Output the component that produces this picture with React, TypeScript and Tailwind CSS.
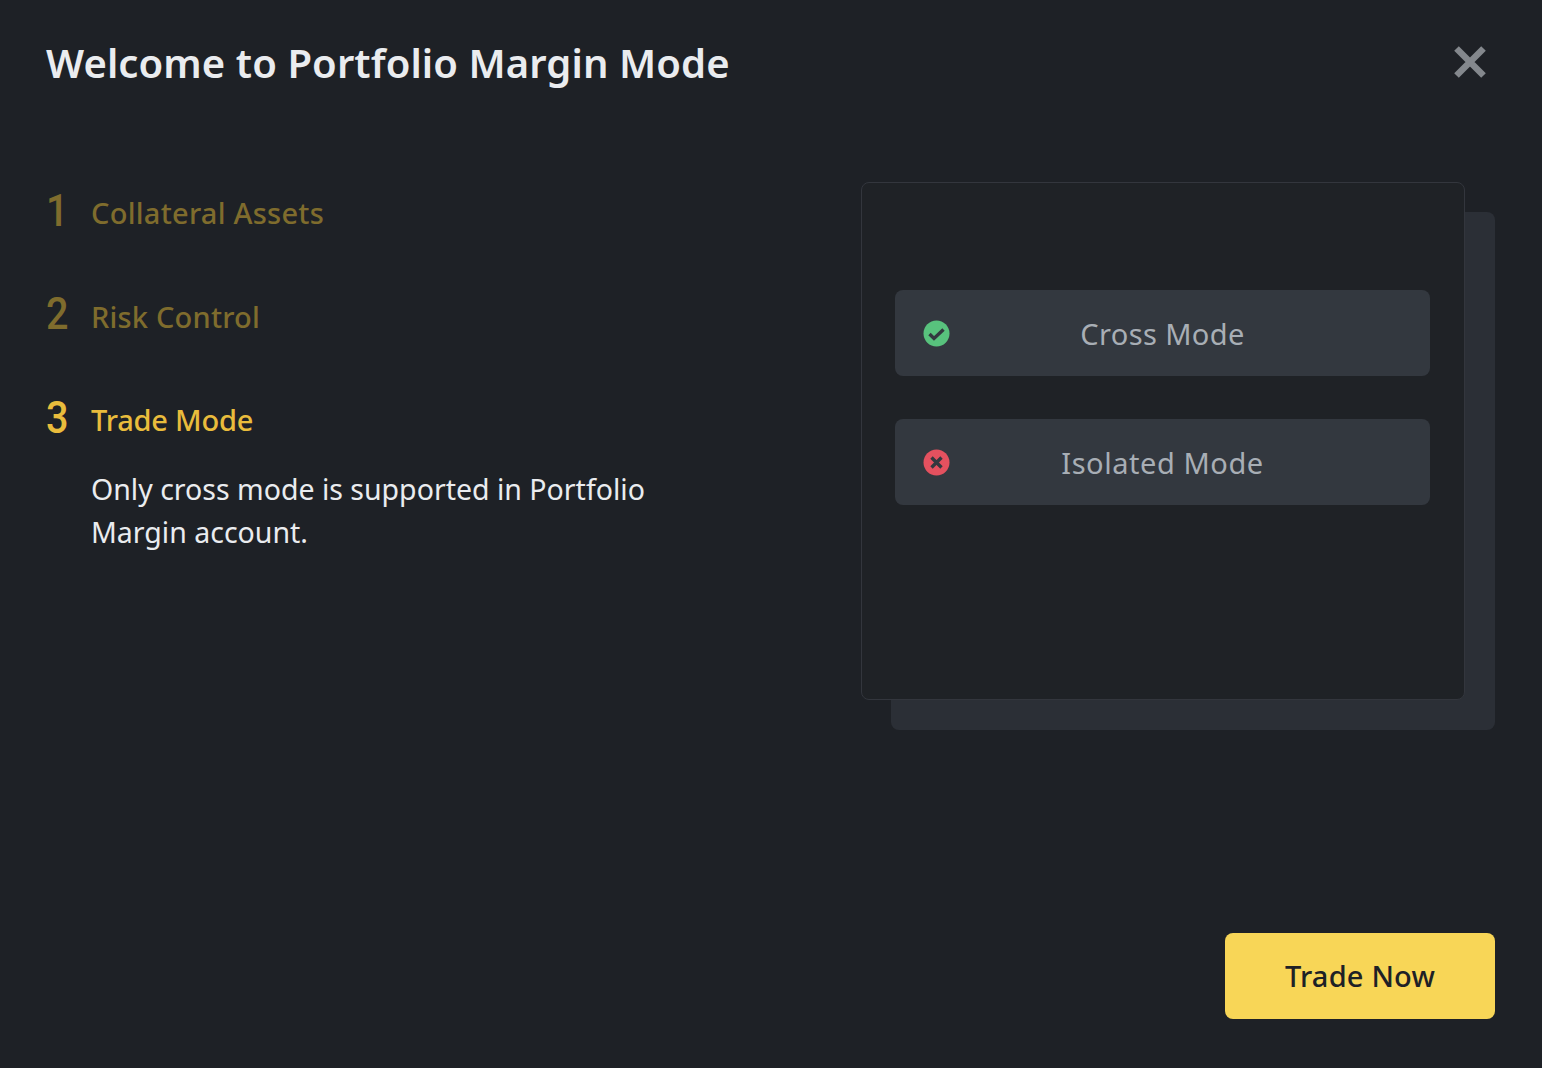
import React from "react";

function Step({ n, title, active, tracking }: { n: string; title: string; active?: boolean; tracking: string }) {
  return (
    <div className={active ? "flex h-[52px] items-center text-[#e9bc3c]" : "flex h-[52px] items-center text-[#7f6c2d]"}>
      <span className="mt-[-5px] inline-block w-[45px] origin-left scale-x-[0.88] font-['Roboto',sans-serif] text-[45px] font-medium leading-[52px]">{n}</span>
      <span className={`text-[29px] font-medium leading-[52px] ${tracking}`}>{title}</span>
    </div>
  );
}

function Mode({ label, ok, tracking }: { label: string; ok?: boolean; tracking: string }) {
  return (
    <div className={`relative flex h-[86px] items-center justify-center rounded-[8px] bg-[#33383f] pt-[1px] text-[29px] text-[#a8aeb5] ${tracking}`}>
      <svg className="absolute left-[28px] top-[30px]" width="27" height="27" viewBox="0 0 27 27">
        <circle cx="13.5" cy="13.5" r="13" fill={ok ? "#58c27d" : "#e4515f"} />
        {ok ? (
          <path d="M6.5 14l4.5 4.5 9.5-9" fill="none" stroke="#33383f" strokeWidth="3.4" />
        ) : (
          <path d="M8.5 8.5l10 10M18.5 8.5l-10 10" fill="none" stroke="#33383f" strokeWidth="3.4" />
        )}
      </svg>
      {label}
    </div>
  );
}

export default function App() {
  return (
    <div className="flex h-[1068px] w-[1542px] flex-col overflow-hidden bg-[#1e2126] pl-[46px] pr-[47px] font-['Noto_Sans',sans-serif]">
      <header className="flex h-[126px] items-center justify-between">
        <h1 className="text-[40px] font-semibold leading-[126px] tracking-[0.1px] text-[#eaecef]">Welcome to Portfolio Margin Mode</h1>
        <svg className="mb-[3px] mr-[9px]" width="32" height="32" viewBox="0 0 32 32">
          <path d="M2.5 2.5l27 27M29.5 2.5l-27 27" fill="none" stroke="#84888d" strokeWidth="6.5" />
        </svg>
      </header>
      <main className="flex flex-1 justify-between pt-[56px]">
        <section className="w-[640px] pt-[5px]">
          <div className="flex flex-col gap-[51.5px]">
            <Step n="1" title="Collateral Assets" tracking="tracking-[0.25px]" />
            <Step n="2" title="Risk Control" tracking="tracking-[0.2px]" />
            <div>
              <Step n="3" title="Trade Mode" active tracking="tracking-[-0.2px]" />
              <p className="mt-[21.5px] pl-[45px] text-[28.5px] leading-[43px] text-[#eaecef]">
                Only cross mode is supported in Portfolio Margin account.
              </p>
            </div>
          </div>
        </section>
        <section className="relative flex h-[548px] w-[634px] shrink-0 flex-col">
          <div className="absolute left-[30px] top-[30px] h-[518px] w-[604px] rounded-[8px] bg-[#2b2f36]" />
          <div className="relative flex h-[518px] w-[604px] flex-col gap-[43px] rounded-[8px] border border-[#33363d] bg-[#1f2226] pl-[33px] pr-[34px] pt-[107px]">
            <Mode label="Cross Mode" ok tracking="tracking-[0.4px]" />
            <Mode label="Isolated Mode" tracking="tracking-[0.55px]" />
          </div>
        </section>
      </main>
      <footer className="flex justify-end pb-[49px]">
        <button className="h-[86px] w-[270px] rounded-[8px] bg-[#f8d657] text-[29px] font-medium tracking-[0.2px] text-[#1e2126]">Trade Now</button>
      </footer>
    </div>
  );
}
